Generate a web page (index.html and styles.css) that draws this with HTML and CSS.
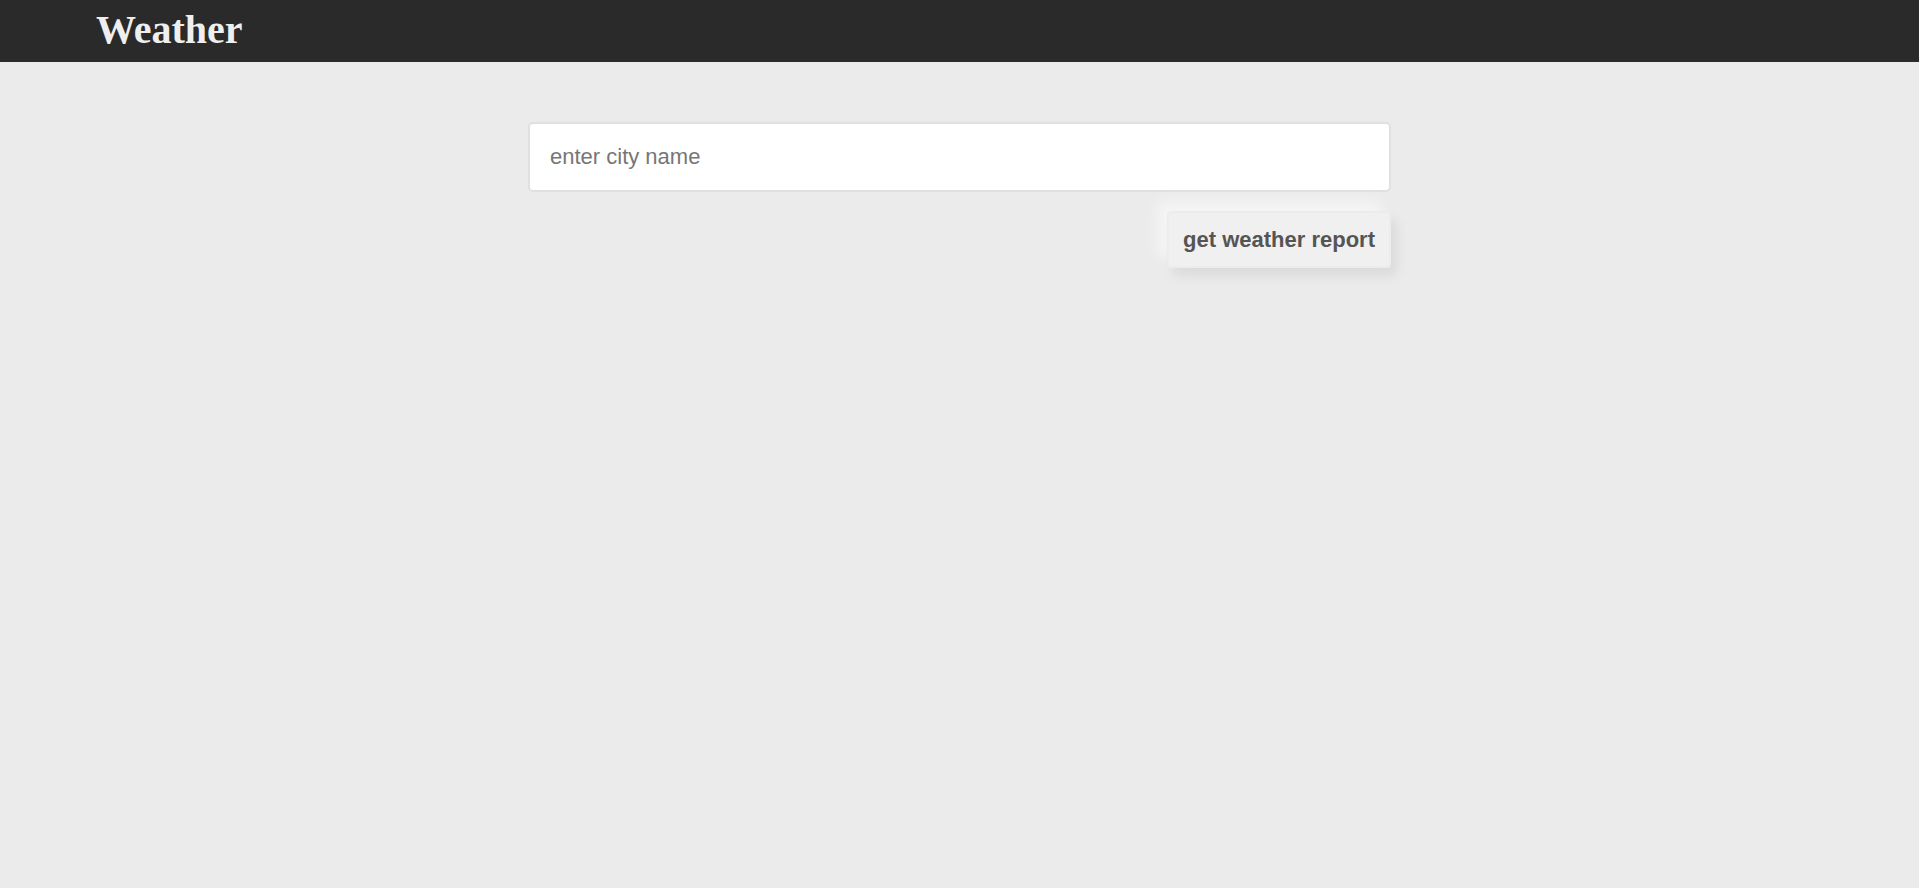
FILE: index.html
```html
<!DOCTYPE html>
<html>
<head>
<meta charset="utf-8">
<title>Weather</title>
<link rel="stylesheet" href="styles.css">
</head>
<body>
<header class="topbar">
  <h1 class="brand">Weather</h1>
</header>
<main class="content">
  <form class="search">
    <input class="city" type="text" placeholder="enter city name">
    <div class="actions">
      <button class="report" type="button">get weather report</button>
    </div>
  </form>
</main>
</body>
</html>
```

FILE: styles.css
```css
html, body {
  margin: 0;
  padding: 0;
  background: #ebebeb;
  height: 100%;
}
.topbar {
  height: 62px;
  background: #2a2a2a;
  display: flex;
  align-items: center;
  padding-left: 96px;
  box-sizing: border-box;
}
.brand {
  margin: 0;
  font-family: "Liberation Serif", "Times New Roman", serif;
  font-weight: bold;
  font-size: 40px;
  color: #efefef;
  line-height: 1;
  padding-bottom: 2px;
}
.content {
  display: flex;
  justify-content: center;
  padding-top: 60px;
}
.search {
  width: 863px;
  display: flex;
  flex-direction: column;
}
.city {
  height: 70px;
  box-sizing: border-box;
  border: 2px solid #e0e0e0;
  border-radius: 5px;
  background: #fff;
  padding: 0 20px;
  font-family: "Liberation Sans", Arial, sans-serif;
  font-size: 22px;
  color: #333;
  outline: none;
}
.city::placeholder {
  color: #767676;
}
.actions {
  display: flex;
  justify-content: flex-end;
  margin-top: 19px;
}
.report {
  font-family: "Liberation Sans", Arial, sans-serif;
  font-weight: bold;
  font-size: 22px;
  color: #555;
  background: #f0f0f0;
  border: 2px solid #ececec;
  border-radius: 4px;
  padding: 14px 14px;
  line-height: 25px;
  box-shadow: 6px 8px 12px rgba(0,0,0,0.07), -10px -10px 14px rgba(255,255,255,0.5);
  cursor: pointer;
}
```
